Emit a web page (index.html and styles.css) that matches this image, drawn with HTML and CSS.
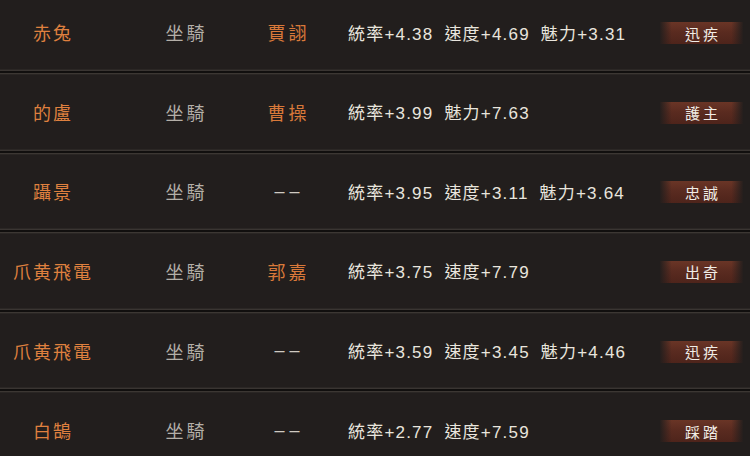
FILE: index.html
```html
<!DOCTYPE html>
<html lang="zh-Hant">
<head>
<meta charset="utf-8">
<title>坐騎</title>
<link rel="stylesheet" href="styles.css">
</head>
<body>
<div class="list">
  <div class="row">
    <div class="cell name">赤兔</div>
    <div class="cell type">坐騎</div>
    <div class="cell owner">賈詡</div>
    <div class="stats"><span>統率+4.38</span><span>速度+4.69</span><span>魅力+3.31</span></div>
    <div class="skill"><span class="badge">迅疾</span></div>
  </div>
  <div class="sep"></div>
  <div class="row">
    <div class="cell name">的盧</div>
    <div class="cell type">坐騎</div>
    <div class="cell owner">曹操</div>
    <div class="stats"><span>統率+3.99</span><span>魅力+7.63</span></div>
    <div class="skill"><span class="badge">護主</span></div>
  </div>
  <div class="sep"></div>
  <div class="row">
    <div class="cell name">躡景</div>
    <div class="cell type">坐騎</div>
    <div class="cell owner none">––</div>
    <div class="stats"><span>統率+3.95</span><span>速度+3.11</span><span>魅力+3.64</span></div>
    <div class="skill"><span class="badge">忠誠</span></div>
  </div>
  <div class="sep"></div>
  <div class="row">
    <div class="cell name">爪黄飛電</div>
    <div class="cell type">坐騎</div>
    <div class="cell owner">郭嘉</div>
    <div class="stats"><span>統率+3.75</span><span>速度+7.79</span></div>
    <div class="skill"><span class="badge">出奇</span></div>
  </div>
  <div class="sep"></div>
  <div class="row">
    <div class="cell name">爪黄飛電</div>
    <div class="cell type">坐騎</div>
    <div class="cell owner none">––</div>
    <div class="stats"><span>統率+3.59</span><span>速度+3.45</span><span>魅力+4.46</span></div>
    <div class="skill"><span class="badge">迅疾</span></div>
  </div>
  <div class="sep"></div>
  <div class="row">
    <div class="cell name">白鵠</div>
    <div class="cell type">坐騎</div>
    <div class="cell owner none">––</div>
    <div class="stats"><span>統率+2.77</span><span>速度+7.59</span></div>
    <div class="skill"><span class="badge">踩踏</span></div>
  </div>
  <div class="sep"></div>
</div>
</body>
</html>
```
FILE: styles.css
```css
html, body {
  margin: 0;
  padding: 0;
  background: #221e1d;
  overflow: hidden;
}
body {
  width: 750px;
  height: 456px;
  font-family: "Liberation Sans", "Noto Sans CJK TC", sans-serif;
}
.list {
  margin-top: -4.6px;
  display: flex;
  flex-direction: column;
  background: #221e1d;
}
.row {
  height: 73.6px;
  display: grid;
  grid-template-columns: 104px 162px 42px 1fr 90px;
  align-items: center;
}
.sep {
  height: 6px;
  background: linear-gradient(to bottom,
    #2b2725 0, #2b2725 1px,
    #3a3532 1px, #3a3532 2px,
    #110f0e 2px, #110f0e 4px,
    #3c3733 4px, #3c3733 5px,
    #2a2624 5px, #2a2624 6px);
}
.cell {
  display: flex;
  justify-content: center;
  white-space: nowrap;
}
.name {
  color: #df803f;
  font-size: 18px;
  letter-spacing: 2px;
  padding-left: 2px;
}
.type {
  color: #b4afa8;
  font-size: 18px;
  letter-spacing: 3px;
  padding-left: 3px;
}
.owner {
  color: #d9793a;
  font-size: 18px;
  letter-spacing: 3px;
  padding-left: 3px;
}
.owner.none {
  color: #cfcac2;
  letter-spacing: 5px;
  padding-left: 5px;
}
.stats {
  padding-left: 40px;
  display: flex;
  gap: 11px;
  color: #e9e5dd;
  font-size: 17px;
  letter-spacing: 1.2px;
  white-space: nowrap;
}
.skill {
  display: flex;
  justify-content: flex-start;
}
.badge {
  width: 83px;
  height: 22px;
  display: flex;
  align-items: center;
  justify-content: center;
  color: #f1ede6;
  font-size: 15px;
  letter-spacing: 3px;
  padding-left: 3px;
  box-sizing: border-box;
  background:
    linear-gradient(to right, rgba(34,30,29,0.95) 0, rgba(34,30,29,0) 14%, rgba(34,30,29,0) 86%, rgba(34,30,29,0.95) 100%),
    linear-gradient(to bottom, #6a3526 0, #5a2b20 45%, #4e241b 100%);
  margin-top: 2px;
}
```
